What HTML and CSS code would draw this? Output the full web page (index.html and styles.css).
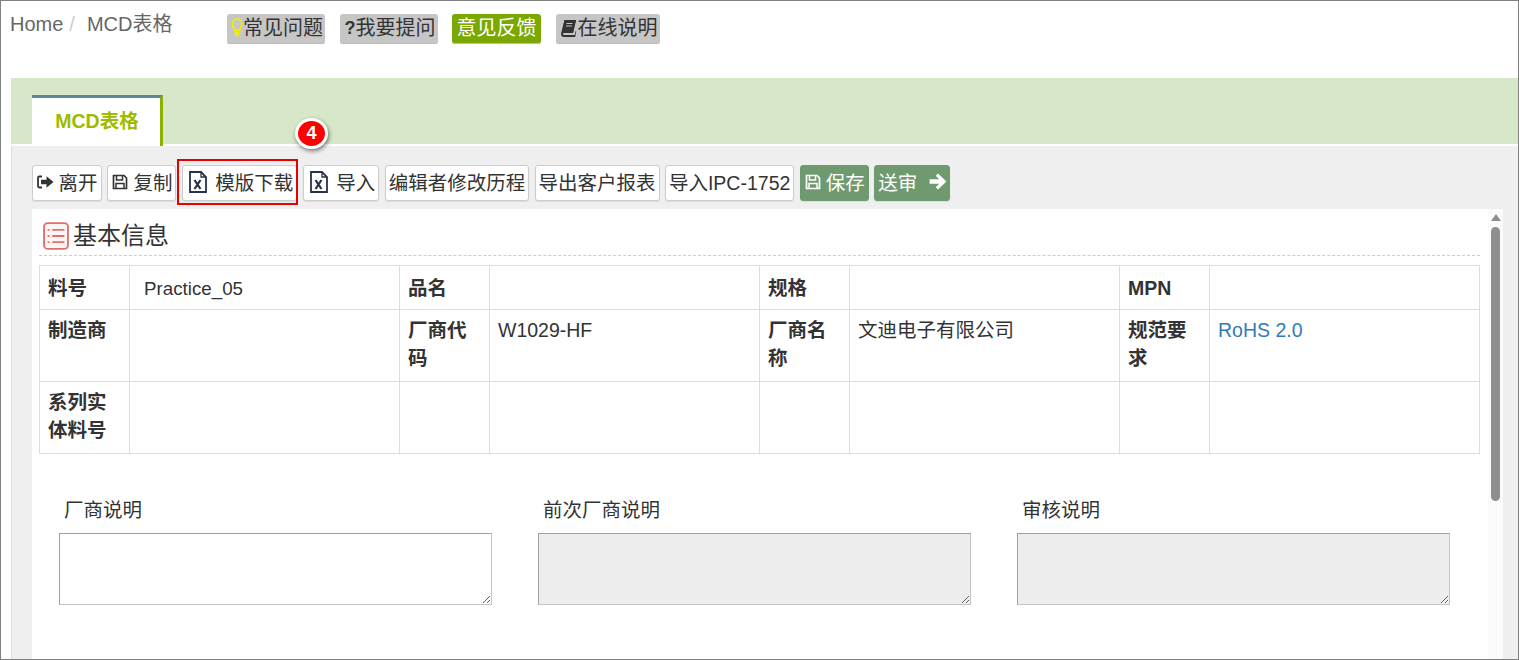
FILE: index.html
```html
<!DOCTYPE html>
<html lang="zh-CN">
<head>
<meta charset="utf-8">
<title>MCD表格</title>
<link rel="stylesheet" href="styles.css">
</head>
<body>
<div class="frame">
  <header class="top">
    <nav class="crumbs"><span class="crumb">Home</span><span class="sep">/</span><span class="crumb">MCD表格</span></nav>
    <div class="helps">
      <a class="help tip"><svg class="bulb" viewBox="0 0 12 20"><path d="M6 1.200a4.800 4.800 0 0 0-4.800 4.800c0 2.300 1.600 3.200 2.100 6.200h5.400c.5-3 2.100-3.900 2.100-6.200A4.800 4.800 0 0 0 6 1.200z" fill="none" stroke="#eeee00" stroke-width="1.700"/><path d="M3.600 13.400h4.800v2.200l-1.200 2.600H4.800l-1.200-2.600z" fill="#eeee00"/></svg>常见问题</a>
      <a class="help ask"><b class="q">?</b>我要提问</a>
      <a class="help on">意见反馈</a>
      <a class="help doc"><svg class="book" viewBox="0 0 16 18"><path d="M4 1h11.500l-3 13H3.600c-.9 0-1.200.6-1.100 1.100.1.500.5.900 1.100.9h10.600l1-4.200.6.600-1.200 5.600H3.200C1.600 18 .4 16.600.6 15z" fill="#333"/><path d="M4 1h11.500l-3 13H1z" fill="#333"/><path d="M6 4.500h6M5.500 7h6" stroke="#c6c6c6" stroke-width="1"/></svg>在线说明</a>
    </div>
  </header>

  <section class="band">
    <div class="tab">MCD表格</div>
  </section>

  <main class="panel">
    <div class="toolbar">
      <button class="btn"><svg class="ic" viewBox="0 0 18 16"><path d="M6 2.500H3.500A1.500 1.500 0 0 0 2 4v8a1.500 1.500 0 0 0 1.500 1.500H6" fill="none" stroke="#333" stroke-width="1.800"/><path d="M5 5.800h5.500V2.200L17.500 8l-7 5.800v-3.600H5z" fill="#333"/></svg>离开</button>
      <button class="btn"><svg class="ic" viewBox="0 0 16 16"><path d="M1.500 1.500h10.500l2.500 2.500v10.500h-13z" fill="none" stroke="#333" stroke-width="1.700"/><path d="M4.500 2v4h6V2M4 14V9.500h8V14" fill="none" stroke="#333" stroke-width="1.500"/></svg>复制</button>
      <button class="btn wide"><svg class="xf" viewBox="0 0 18 22"><path d="M1 1h11l5 5v15H1z" fill="none" stroke="#25324a" stroke-width="1.800"/><path d="M12 1v5h5" fill="none" stroke="#25324a" stroke-width="1.300"/><path d="M5.500 9l6 9M11.500 9l-6 9" stroke="#25324a" stroke-width="2.200"/></svg>模版下载</button>
      <button class="btn wide"><svg class="xf" viewBox="0 0 18 22"><path d="M1 1h11l5 5v15H1z" fill="none" stroke="#25324a" stroke-width="1.800"/><path d="M12 1v5h5" fill="none" stroke="#25324a" stroke-width="1.300"/><path d="M5.500 9l6 9M11.500 9l-6 9" stroke="#25324a" stroke-width="2.200"/></svg>导入</button>
      <button class="btn">编辑者修改历程</button>
      <button class="btn">导出客户报表</button>
      <button class="btn">导入IPC-1752</button>
      <button class="btn go"><svg class="ic" viewBox="0 0 16 16"><path d="M1.500 1.500h10.500l2.500 2.500v10.500h-13z" fill="none" stroke="#fff" stroke-width="1.700"/><path d="M4.500 2v4h6V2M4 14V9.500h8V14" fill="none" stroke="#fff" stroke-width="1.500"/></svg>保存</button>
      <button class="btn go send">送审<svg class="arrow" viewBox="1 1 15 14"><path d="M1.500 6.200h8L6.600 3.300 8.500 1.400 15.500 8l-7 6.600-1.900-1.900 2.900-2.900h-8z" fill="#fff"/></svg></button>
    </div>

    <div class="sheet">
      <div class="content">
        <h2 class="title"><svg class="list" viewBox="0 0 28 30"><rect x="1.200" y="1.200" width="25.600" height="27.600" rx="4" fill="#fdf4f4" stroke="#df7070" stroke-width="2"/><path d="M10 8.500h13M10 15h13M10 21.500h13" stroke="#df7070" stroke-width="2"/><path d="M5 8.500h2M5 15h2M5 21.500h2" stroke="#df7070" stroke-width="2"/></svg>基本信息</h2>
        <table class="info">
          <tr class="r1"><th>料号</th><td class="pad">Practice_05</td><th>品名</th><td></td><th>规格</th><td></td><th>MPN</th><td></td></tr>
          <tr><th>制造商</th><td></td><th>厂商代码</th><td>W1029-HF</td><th>厂商名称</th><td>文迪电子有限公司</td><th>规范要求</th><td><a class="link">RoHS 2.0</a></td></tr>
          <tr><th>系列实体料号</th><td></td><td></td><td></td><td></td><td></td><td></td><td></td></tr>
        </table>
        <div class="notes">
          <label class="note"><span class="cap">厂商说明</span><textarea class="box"></textarea></label>
          <label class="note"><span class="cap">前次厂商说明</span><textarea class="box off" readonly></textarea></label>
          <label class="note"><span class="cap">审核说明</span><textarea class="box off" readonly></textarea></label>
        </div>
      </div>
      <div class="scroll"><span class="up"></span><span class="thumb"></span></div>
    </div>
  </main>

  <div class="mark"></div>
  <div class="badge">4</div>
</div>
</body>
</html>
```

FILE: styles.css
```css
* { box-sizing: border-box; }
html, body { margin: 0; height: 100%; overflow: hidden; background: #fff; }
body { font-family: "Liberation Sans", "Noto Sans CJK SC", sans-serif; color: #333; font-size: 18.2px; }

.frame { position: relative; width: 1519px; height: 660px; border: 1px solid #808080; display: flex; flex-direction: column; overflow: hidden; }

.top { height: 77px; display: flex; align-items: flex-start; flex: none; }
.crumbs { padding: 9px 0 0 9px; width: 226px; flex: none; font-size: 20px; line-height: 28px; color: #666; display: flex; }
.sep { color: #ccc; margin: 0 12px 0 6px; }
.helps { display: flex; gap: 14.500px; padding-top: 13px; }
.help { height: 30px; padding: 0 2px 2px 4px; background: #c6c6c6; border-radius: 3px; font-size: 20px; line-height: 28px; color: #333; display: flex; align-items: center; box-shadow: inset 0 -1px 0 #bbb; }
.help.on { background: #7ba800; color: #fff; padding: 0 4.500px 2px; }
.help.ask { padding-left: 5px; }
.help.doc { padding-left: 3px; }
.bulb { width: 12px; height: 20px; flex: none; }
.book { width: 19px; height: 18px; flex: none; }
.q { font-size: 18px; font-weight: 700; }

.band { margin-left: 10px; height: 68px; flex: none; background: #d6e8c8; padding: 17px 0 0 21px; border-bottom: 2px solid #fff; }
.tab { width: 131px; height: 51px; background: #fff; border-top: 3px solid #5a8a94; border-right: 3px solid #8db000; color: #9dbb00; font-weight: 700; font-size: 19.500px; text-align: center; line-height: 46px; padding-left: 2px; }

.panel { margin-left: 10px; flex: 1; background: #efefef; padding: 19px 15px 0 21px; border-left: 1px solid #ddd; min-height: 0; display: flex; flex-direction: column; }
.toolbar { display: flex; gap: 5.400px; height: 36px; flex: none; margin-bottom: 8px; margin-left: -1px; }
.btn { height: 36px; padding: 0 3px 3px; border: 1px solid #ccc; border-radius: 3px; background: #fff; color: #333; font: inherit; font-size: 19.500px; display: flex; align-items: center; white-space: nowrap; box-shadow: 0 1px 1px #ddd; }
.btn.wide { padding: 0 3px 3px 6px; }
.btn.go { background: #6f9a70; border-color: #6f9a70; color: #fff; }
.ic { width: 18px; height: 16px; margin-right: 4.500px; flex: none; }
.go .ic { margin-right: 4px; }
.xf { width: 18px; height: 22px; margin-right: 8.500px; flex: none; }
.btn.send { padding-right: 2px; }
.arrow { width: 18px; height: 17px; margin-left: 12px; }

.sheet { flex: 1; background: #fff; display: flex; min-height: 0; margin-left: -1px; border-radius: 2px 2px 0 0; }
.content { flex: 1; padding: 0 8px 0 7px; min-width: 0; }
.title { margin: 0; height: 47px; padding: 8px 0 0 3px; font-weight: 400; font-size: 24px; line-height: 34px; color: #333; display: flex; align-items: center; gap: 3px; border-bottom: 1px dashed #ccc; }
.list { width: 28px; height: 28px; flex: none; }

.info { width: 1441px; margin-top: 9px; border-collapse: collapse; table-layout: fixed; line-height: 28px; }
.info th, .info td { border: 1px solid #ddd; padding: 6px 8px 9px; text-align: left; vertical-align: top; overflow-wrap: anywhere; font-size: 19.500px; }
.info th { width: 90px; font-weight: 700; }
.info td { width: 270px; font-weight: 400; }
.info .r1 th, .info .r1 td { height: 44px; }
.info .r1 th { padding: 8px 8px 7px; }
.info td.pad { padding: 9px 8px 6px 14px; font-size: 18.750px; }
.link { color: #337ab7; }

.notes { display: flex; padding: 42px 0 0 20px; gap: 46px; }
.note { width: 433px; display: flex; flex-direction: column; }
.cap { font-size: 19.500px; line-height: 28px; padding-left: 5px; margin-bottom: 9px; }
.box { display: block; width: 433px; height: 72px; padding: 0; border: 1px solid; border-color: #a0a0a0 #c4c4c4 #c4c4c4 #a0a0a0; background: #fff; outline: none; border-radius: 0; }
.box.off { background: #ededed; }

.scroll { width: 15px; flex: none; background: #fbfbfb; display: flex; flex-direction: column; align-items: center; padding-top: 5px; }
.up { width: 0; height: 0; border-left: 5px solid transparent; border-right: 5px solid transparent; border-bottom: 7px solid #8e8e8e; }
.thumb { width: 9px; height: 274px; margin-top: 6px; background: #8e8e8e; border-radius: 5px; }

.mark { position: absolute; left: 176px; top: 158px; width: 121px; height: 46px; border: 2px solid #e60000; pointer-events: none; }
.badge { position: absolute; left: 294px; top: 117px; width: 33px; height: 31px; border-radius: 50%; background: #f00; border: 3px solid #fff; box-shadow: 1px 2px 4px rgba(0,0,0,.5); color: #fff; font-weight: 700; font-size: 18px; line-height: 25px; text-align: center; }
```
